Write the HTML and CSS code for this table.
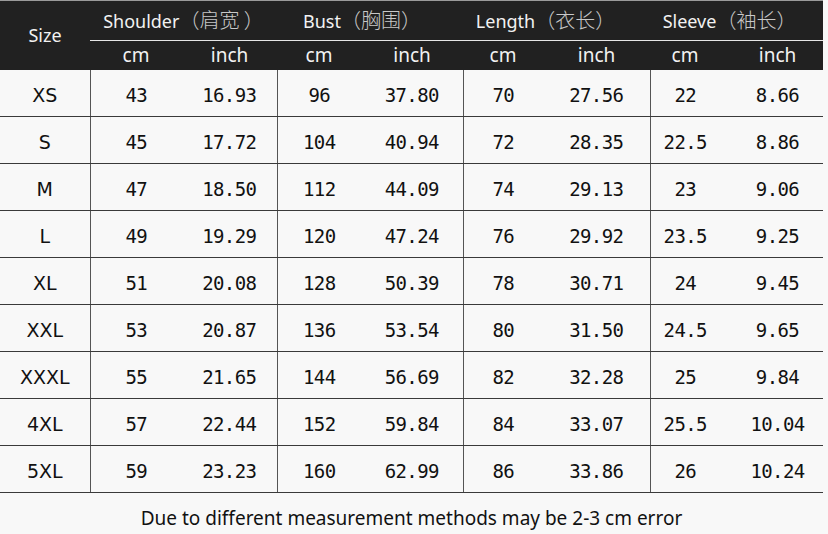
FILE: index.html
```html
<!DOCTYPE html>
<html>
<head>
<meta charset="utf-8">
<link rel="stylesheet" href="styles.css">
</head>
<body>
<table class="chart">
  <colgroup>
    <col class="c-size"><col class="c1"><col class="c2"><col class="c3"><col class="c4"><col class="c5"><col class="c6"><col class="c7"><col class="c8">
  </colgroup>
  <thead>
    <tr class="h1">
      <th rowspan="2" class="size-h">Size</th>
      <th colspan="2" class="grp">Shoulder<span class="cjk">（肩宽 ）</span></th>
      <th colspan="2" class="grp g-bust">Bust<span class="cjk">（胸围）</span></th>
      <th colspan="2" class="grp g-len">Length<span class="cjk">（衣长）</span></th>
      <th colspan="2" class="grp g-slv">Sleeve<span class="cjk">（袖长）</span></th>
    </tr>
    <tr class="h2">
      <th>cm</th><th>inch</th>
      <th>cm</th><th>inch</th>
      <th>cm</th><th>inch</th>
      <th>cm</th><th class="last">inch</th>
    </tr>
  </thead>
  <tbody>
    <tr><td class="sz">XS</td><td class="g">43</td><td>16.93</td><td class="g">96</td><td>37.80</td><td class="g">70</td><td>27.56</td><td class="g">22</td><td class="last">8.66</td></tr>
    <tr><td class="sz">S</td><td class="g">45</td><td>17.72</td><td class="g">104</td><td>40.94</td><td class="g">72</td><td>28.35</td><td class="g">22.5</td><td class="last">8.86</td></tr>
    <tr><td class="sz">M</td><td class="g">47</td><td>18.50</td><td class="g">112</td><td>44.09</td><td class="g">74</td><td>29.13</td><td class="g">23</td><td class="last">9.06</td></tr>
    <tr><td class="sz">L</td><td class="g">49</td><td>19.29</td><td class="g">120</td><td>47.24</td><td class="g">76</td><td>29.92</td><td class="g">23.5</td><td class="last">9.25</td></tr>
    <tr><td class="sz">XL</td><td class="g">51</td><td>20.08</td><td class="g">128</td><td>50.39</td><td class="g">78</td><td>30.71</td><td class="g">24</td><td class="last">9.45</td></tr>
    <tr><td class="sz">XXL</td><td class="g">53</td><td>20.87</td><td class="g">136</td><td>53.54</td><td class="g">80</td><td>31.50</td><td class="g">24.5</td><td class="last">9.65</td></tr>
    <tr><td class="sz">XXXL</td><td class="g">55</td><td>21.65</td><td class="g">144</td><td>56.69</td><td class="g">82</td><td>32.28</td><td class="g">25</td><td class="last">9.84</td></tr>
    <tr><td class="sz">4XL</td><td class="g">57</td><td>22.44</td><td class="g">152</td><td>59.84</td><td class="g">84</td><td>33.07</td><td class="g">25.5</td><td class="last">10.04</td></tr>
    <tr><td class="sz">5XL</td><td class="g">59</td><td>23.23</td><td class="g">160</td><td>62.99</td><td class="g">86</td><td>33.86</td><td class="g">26</td><td class="last">10.24</td></tr>
  </tbody>
</table>
<p class="note">Due to different measurement methods may be 2-3 cm error</p>
</body>
</html>
```

FILE: styles.css
```css
html, body {
  margin: 0;
  padding: 0;
  background: #f8f8f8;
}
body {
  width: 828px;
  height: 534px;
  overflow: hidden;
  font-family: "Noto Sans", "Noto Sans CJK SC", sans-serif;
  color: #111;
}
.chart {
  width: 823px;
  table-layout: fixed;
  border-collapse: collapse;
  border-spacing: 0;
}
.c-size { width: 90px; }
.c1 { width: 92px; }
.c2 { width: 95px; }
.c3 { width: 84px; }
.c4 { width: 102px; }
.c5 { width: 80px; }
.c6 { width: 107px; }
.c7 { width: 70px; }
.c8 { width: 103px; }

.chart thead th {
  background: #212121;
  color: #f2f2f2;
  font-weight: 400;
  padding: 0;
  text-align: center;
}
.h1 th {
  height: 39px;
  border-top: 1px solid #9a9a9a;
  font-size: 18px;
  line-height: 37px;
}
.h1 .grp {
  border-bottom: 1px solid #e6e6e6;
  white-space: nowrap;
}
.chart thead th.g-bust { padding-right: 16px; }
.chart thead th.g-len { padding-right: 22px; }
.chart thead th.g-slv { padding-right: 14px; }
.size-h {
  font-size: 18px;
  vertical-align: middle;
}
.cjk {
  font-family: "Noto Sans CJK SC", sans-serif;
  font-weight: 300;
  font-size: 20px;
  color: #c8c8c8;
}
.h2 th {
  height: 29px;
  font-size: 19px;
  line-height: 29px;
}
.h2 th.last { padding-left: 12px; }

.chart tbody td {
  height: 42px;
  padding: 4px 0 0;
  text-align: center;
  border-bottom: 1px solid #3a3a3a;
  font-family: "DejaVu Sans Mono", monospace;
  font-size: 19px;
  letter-spacing: -0.6px;
  color: #111;
}
.chart tbody td.sz {
  font-family: "DejaVu Sans", sans-serif;
  font-size: 19px;
  letter-spacing: 0;
  border-right: 1px solid #555;
}
.chart tbody td.g {
  border-left: 1px solid #555;
}
.chart tbody td.last { padding-left: 12px; }

.note {
  margin: 0;
  padding-top: 12px;
  width: 823px;
  text-align: center;
  font-size: 19px;
  color: #111;
}
```
